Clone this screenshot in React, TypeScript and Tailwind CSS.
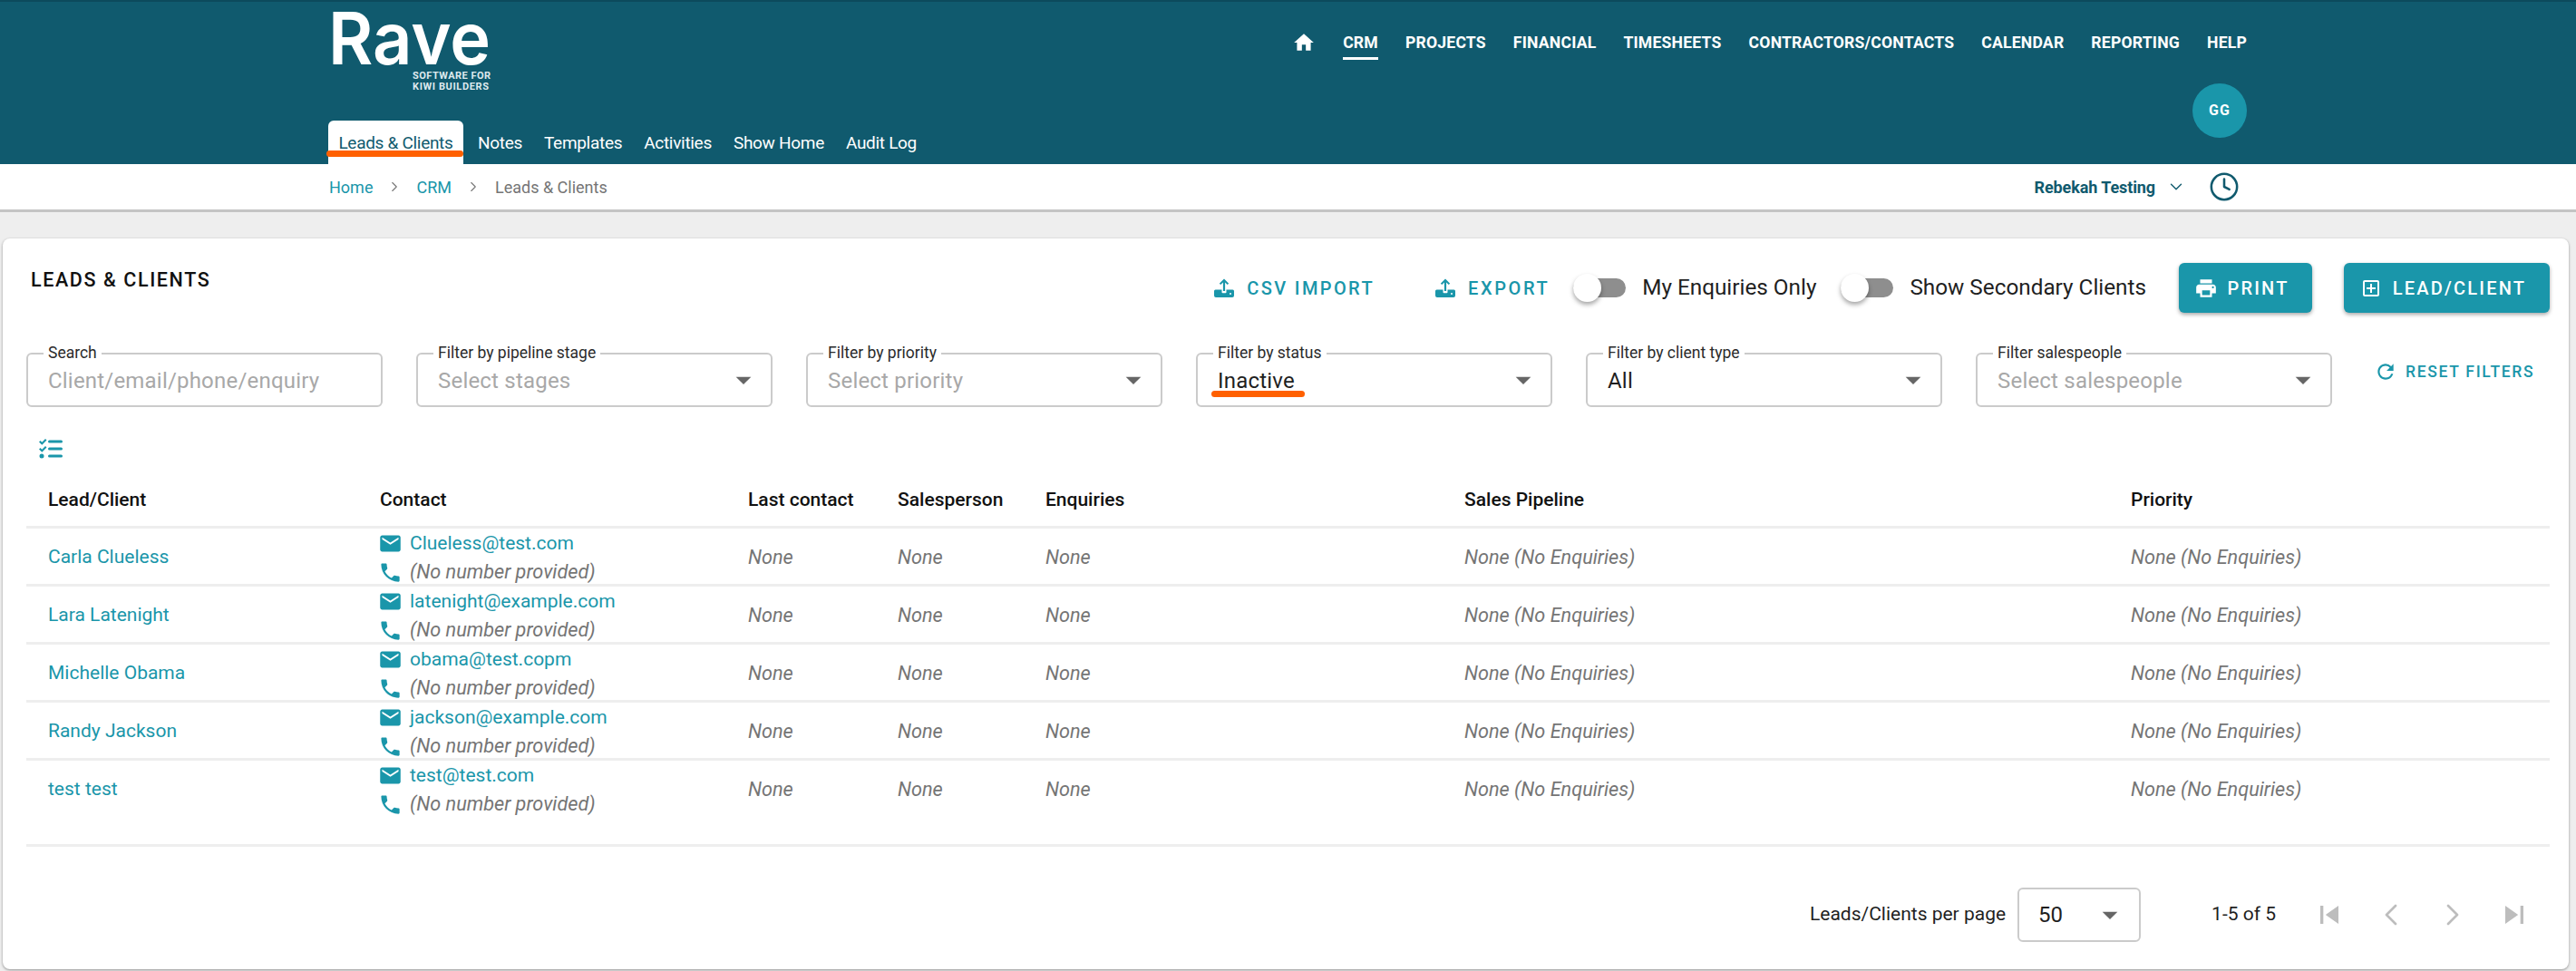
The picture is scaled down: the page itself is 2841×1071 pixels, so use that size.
import { ChevronDown, ChevronLeft, ChevronRight, Clock } from 'lucide-react';
import {
  MdHome,
  MdEmail,
  MdPhone,
  MdPrint,
  MdOutlineAddBox,
  MdRefresh,
  MdArrowDropDown,
  MdSkipPrevious,
  MdSkipNext,
} from 'react-icons/md';

const topNav = ['CRM', 'PROJECTS', 'FINANCIAL', 'TIMESHEETS', 'CONTRACTORS/CONTACTS', 'CALENDAR', 'REPORTING', 'HELP'];
const subNav = ['Notes', 'Templates', 'Activities', 'Show Home', 'Audit Log'];

const clients = [
  { name: 'Carla Clueless', email: 'Clueless@test.com' },
  { name: 'Lara Latenight', email: 'latenight@example.com' },
  { name: 'Michelle Obama', email: 'obama@test.copm' },
  { name: 'Randy Jackson', email: 'jackson@example.com' },
  { name: 'test test', email: 'test@test.com' },
];

const columns = 'grid grid-cols-[366px_406px_165px_163px_462px_735px_1fr]';

function TrayUpload() {
  return (
    <svg width="24" height="24" viewBox="0 0 24 24" fill="#1a96aa">
      <path d="M12 1.5 6.8 6.7l1.5 1.4 2.6-2.6V15h2.2V5.5l2.6 2.6 1.5-1.4z" />
      <path d="M2.5 13.5h7v2.7a1 1 0 0 0 1 1h3a1 1 0 0 0 1-1v-2.7h7a1.5 1.5 0 0 1 1.5 1.5v5a2 2 0 0 1-2 2H3a2 2 0 0 1-2-2v-5a1.5 1.5 0 0 1 1.500-1.500z" />
      <circle cx="19" cy="18" r="1" fill="#fff" />
    </svg>
  );
}

function ChecklistIcon() {
  return (
    <svg width="26" height="22" viewBox="0 0 26 22" fill="#1a96aa">
      <path d="M0 3.500 1.500 2l1.800 1.800L7 0l1.500 1.500L3.300 6.700zM0 11.500 1.500 10l1.800 1.800L7 8l1.500 1.500-5.200 5.200z" />
      <circle cx="3" cy="19" r="2.500" />
      <rect x="10" y="1.500" width="16" height="3" rx="1.500" />
      <rect x="10" y="9.500" width="16" height="3" rx="1.500" />
      <rect x="10" y="17.500" width="16" height="3" rx="1.500" />
    </svg>
  );
}

function Toggle({ label }: { label: string }) {
  return (
    <div className="flex items-center gap-[18px]">
      <div className="relative h-[21px] w-[58px] rounded-full bg-[#8e8e8e]">
        <div className="absolute left-0 top-[-5px] h-[31px] w-[31px] rounded-full bg-white shadow-[0_3px_5px_rgba(0,0,0,0.35)]" />
      </div>
      <span className="text-[24.3px] leading-none text-[#1f1f1f]">{label}</span>
    </div>
  );
}

function FilterBox({
  label,
  value,
  placeholder,
  arrow = true,
}: {
  label: string;
  value?: string;
  placeholder?: string;
  arrow?: boolean;
}) {
  return (
    <div className="relative flex h-[60px] w-[393px] shrink-0 items-center justify-between rounded-[6px] border-2 border-[#cbcbcb] pl-[22px] pr-[10px]">
      <span className="absolute left-[17px] top-[-13px] bg-white px-[5px] text-[17.5px] leading-[22px] text-[#2b2b2b]">
        {label}
      </span>
      <span className={`pt-[2px] text-[24px] leading-none tracking-[0.2px] ${value ? 'text-[#1f1f1f]' : 'text-[#a8a8a8]'}`}>
        {value ?? placeholder}
      </span>
      {arrow && <MdArrowDropDown size={40} className="text-[#666666]" />}
    </div>
  );
}

export default function App() {
  return (
    <div className="h-[1071px] w-[2841px] overflow-hidden bg-[#eeeeee] [font-family:Roboto,sans-serif]">
      {/* Top bar */}
      <header className="flex h-[181px] border-t-2 border-[#0c4a5c] bg-[#105a6e] pl-[362px] pr-[363px]">
        <div className="flex w-[800px] flex-col">
          <svg width="190" height="100" viewBox="0 0 190 100" className="mt-[6px] h-[100px] w-[190px]">
            <text x="0" y="63" fill="#ffffff" fontFamily="Inter, sans-serif" fontWeight="600" fontSize="80" textLength="179" lengthAdjust="spacingAndGlyphs">
              Rave
            </text>
            <text x="93" y="79" fill="#dfeaee" fontFamily="Roboto, sans-serif" fontWeight="700" fontSize="11" textLength="86" lengthAdjust="spacing">
              SOFTWARE FOR
            </text>
            <text x="93" y="91" fill="#dfeaee" fontFamily="Roboto, sans-serif" fontWeight="700" fontSize="11" textLength="84" lengthAdjust="spacing">
              KIWI BUILDERS
            </text>
          </svg>
          <nav className="mt-[25px] flex items-end">
            <div className="relative flex h-[48px] w-[149px] justify-center rounded-t-[6px] bg-white pt-[14px] text-[19px] leading-[22px] tracking-[-0.3px] text-[#105a6e]">
              Leads &amp; Clients
              <div className="absolute bottom-[8px] left-[-2px] h-[7px] w-[151px] rounded-full bg-[#ff6000]" />
            </div>
            <div className="ml-[16px] flex h-[48px] gap-[24px] pt-[14px] text-[19px] leading-[22px] tracking-[-0.3px] text-white">
              {subNav.map((item) => (
                <span key={item}>{item}</span>
              ))}
            </div>
          </nav>
        </div>
        <div className="flex flex-1 flex-col items-end">
          <nav className="mt-[33px] flex items-start gap-[30px] text-[17.6px] font-bold leading-[24px] tracking-[0.2px] text-white">
            <MdHome size={26} className="mt-[-1px]" />
            {topNav.map((item) => (
              <span key={item} className={item === 'CRM' ? 'h-[31px] border-b-[3px] border-white' : ''}>
                {item}
              </span>
            ))}
          </nav>
          <div className="mt-[26px] flex h-[60px] w-[60px] items-center justify-center rounded-full bg-[#1a96aa] text-[16px] font-bold tracking-[1px] text-white">
            GG
          </div>
        </div>
      </header>

      {/* Breadcrumb */}
      <div className="flex h-[53px] items-center border-b-[3px] border-[#c4c4c4] bg-white pl-[363px] pr-[371px] text-[18px]">
        <span className="text-[#1a96aa]">Home</span>
        <ChevronRight size={18} strokeWidth={1.5} className="mx-[15px] text-[#777777]" />
        <span className="text-[#1a96aa]">CRM</span>
        <ChevronRight size={18} strokeWidth={1.5} className="mx-[15px] text-[#777777]" />
        <span className="text-[#757575]">Leads &amp; Clients</span>
        <span className="ml-auto text-[18px] font-bold tracking-[-0.1px] text-[#105a6e]">Rebekah Testing</span>
        <ChevronDown size={22} strokeWidth={1.5} className="ml-[12px] text-[#105a6e]" />
        <Clock size={34} strokeWidth={1.8} className="ml-[25px] text-[#105a6e]" />
      </div>

      {/* Card */}
      <main className="ml-[3px] mt-[29px] h-[806px] w-[2830px] rounded-[8px] bg-white pl-[26px] pr-[21px] pt-[27px] shadow-[0_1px_3px_rgba(0,0,0,0.4)]">
        <div className="flex h-[55px] items-center">
          <h1 className="pl-[5px] pb-[16px] text-[21.5px] font-medium tracking-[1.6px] text-[#111111]">LEADS &amp; CLIENTS</h1>
          <div className="ml-auto flex items-center">
            <button className="flex items-center gap-[13px] text-[20px] font-medium tracking-[2.4px] text-[#1a96aa]">
              <TrayUpload />
              CSV IMPORT
            </button>
            <button className="ml-[66px] flex items-center gap-[13px] text-[20px] font-medium tracking-[2.6px] text-[#1a96aa]">
              <TrayUpload />
              EXPORT
            </button>
            <div className="ml-[26px]">
              <Toggle label="My Enquiries Only" />
            </div>
            <div className="ml-[27px]">
              <Toggle label="Show Secondary Clients" />
            </div>
            <button className="ml-[36px] flex h-[55px] w-[147px] items-center justify-center gap-[10px] rounded-[6px] bg-[#1a96aa] pr-[8px] text-[20px] font-medium tracking-[2.2px] text-white shadow-[0_2px_4px_rgba(0,0,0,0.35)]">
              <MdPrint size={26} />
              PRINT
            </button>
            <button className="ml-[35px] flex h-[55px] w-[227px] items-center justify-center gap-[12px] rounded-[6px] bg-[#1a96aa] pr-[8px] text-[20px] font-medium tracking-[2.2px] text-white shadow-[0_2px_4px_rgba(0,0,0,0.35)]">
              <MdOutlineAddBox size={24} />
              LEAD/CLIENT
            </button>
          </div>
        </div>

        {/* Filters */}
        <div className="mt-[44px] flex gap-[37px]">
          <FilterBox label="Search" placeholder="Client/email/phone/enquiry" arrow={false} />
          <FilterBox label="Filter by pipeline stage" placeholder="Select stages" />
          <FilterBox label="Filter by priority" placeholder="Select priority" />
          <div className="relative">
            <FilterBox label="Filter by status" value="Inactive" />
            <div className="absolute left-[17px] top-[42px] h-[7px] w-[103px] rounded-full bg-[#ff6000]" />
          </div>
          <FilterBox label="Filter by client type" value="All" />
          <FilterBox label="Filter salespeople" placeholder="Select salespeople" />
          <button className="ml-[9px] flex h-[42px] items-center gap-[9px] text-[17.5px] font-medium tracking-[1.7px] text-[#1a96aa]">
            <MdRefresh size={26} />
            RESET FILTERS
          </button>
        </div>

        <div className="ml-[14px] mt-[35px] h-[22px]">
          <ChecklistIcon />
        </div>

        {/* Table */}
        <div className={`${columns} h-[77px] items-center border-b-[3px] border-[#eeeeee] pl-[24px] pt-[18px] text-[21px] font-medium text-[#111111]`}>
          <div>Lead/Client</div>
          <div>Contact</div>
          <div>Last contact</div>
          <div>Salesperson</div>
          <div>Enquiries</div>
          <div>Sales Pipeline</div>
          <div>Priority</div>
        </div>
        <div className="h-[351px] border-b-[3px] border-[#eeeeee]">
          {clients.map((client, i) => (
            <div
              key={client.name}
              className={`${columns} h-[64px] items-center border-b-[3px] pb-[3px] pl-[24px] text-[21.7px] italic text-[#757575] ${i < clients.length - 1 ? 'border-[#eeeeee]' : 'border-transparent'}`}
            >
              <div className="text-[21px] not-italic text-[#1a96aa]">{client.name}</div>
              <div className="ml-[-2px] flex flex-col leading-[32px]">
                <div className="flex items-center gap-[8px] text-[21px] not-italic text-[#1a96aa]">
                  <MdEmail size={27} />
                  {client.email}
                </div>
                <div className="flex items-center gap-[8px]">
                  <MdPhone size={27} className="text-[#1a96aa]" />
                  (No number provided)
                </div>
              </div>
              <div>None</div>
              <div>None</div>
              <div>None</div>
              <div>None (No Enquiries)</div>
              <div>None (No Enquiries)</div>
            </div>
          ))}
        </div>

        {/* Pagination */}
        <div className="mt-[45px] flex items-center justify-end pr-[19px] text-[21px] text-[#1f1f1f]">
          <span>Leads/Clients per page</span>
          <div className="ml-[13px] flex h-[60px] w-[136px] items-center justify-between rounded-[6px] border-2 border-[#cbcbcb] pl-[21px] pr-[12px] text-[24px]">
            50
            <MdArrowDropDown size={40} className="text-[#666666]" />
          </div>
          <span className="ml-[78px]">1-5 of 5</span>
          <div className="ml-[39px] flex gap-[28px] text-[#bdbdbd]">
            <MdSkipPrevious size={40} />
            <ChevronLeft size={40} strokeWidth={1.6} />
            <ChevronRight size={40} strokeWidth={1.6} />
            <MdSkipNext size={40} />
          </div>
        </div>
      </main>
    </div>
  );
}
